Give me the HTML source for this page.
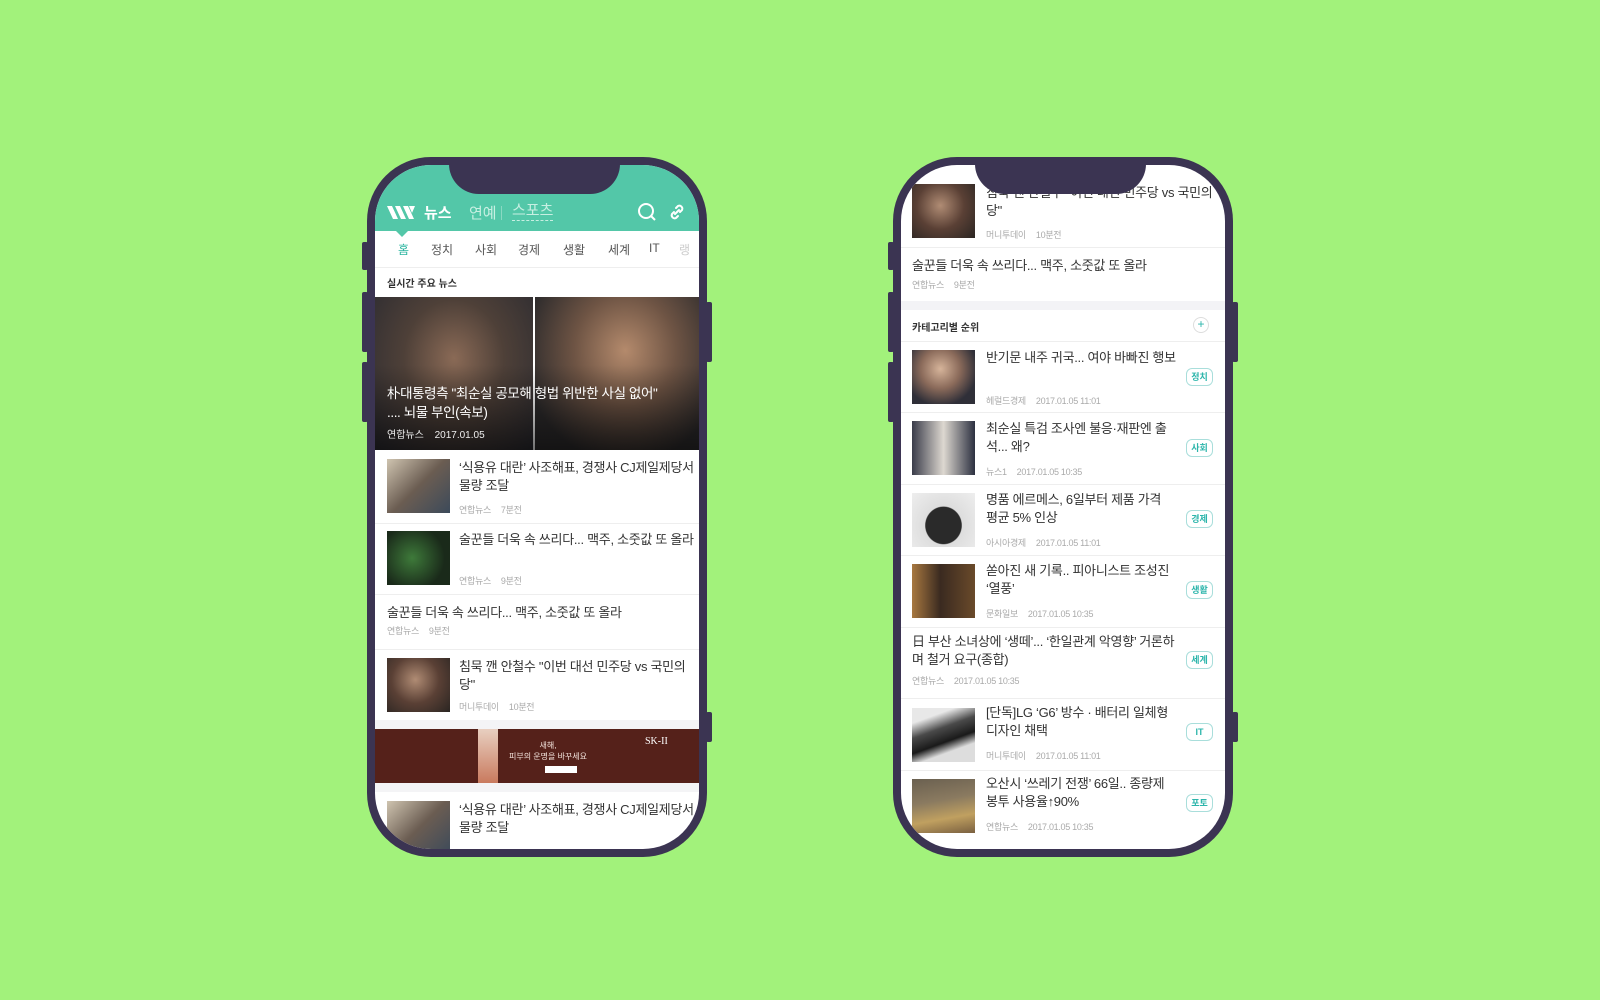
<!DOCTYPE html>
<html><head><meta charset="utf-8"><style>
*{margin:0;padding:0;box-sizing:border-box}
body{width:1600px;height:1000px;background:#a2f27b;position:relative;overflow:hidden;font-family:"Liberation Sans","Noto Sans CJK KR","NanumGothic",sans-serif;color:#333}
.phone{position:absolute;top:157px;width:340px;height:700px;background:#3b3452;border-radius:64px}
.btn{position:absolute;background:#3b3452;width:6px;border-radius:2px}
.screen{position:absolute;left:8px;top:8px;width:324px;height:684px;border-radius:56px;overflow:hidden;background:#fff}
.notch{position:absolute;left:82px;top:0;width:171px;height:37px;background:#3b3452;border-radius:0 0 30px 30px;z-index:5}
.a{position:absolute}
.t{position:absolute;font-size:13px;line-height:18px;color:#333;letter-spacing:-.3px}
.m{position:absolute;font-size:9px;color:#aaa;letter-spacing:-.3px}
.m span{margin-left:10px}
.hr{position:absolute;left:0;width:324px;height:1px;background:#eee}
.th{position:absolute;width:63px;height:54px}
.bd{position:absolute;right:12px;width:27px;height:18px;border:1px solid #a9dedb;border-radius:6px;color:#2cb5ab;font-size:9px;text-align:center;line-height:16px;font-weight:bold}
</style></head><body>

<!-- LEFT PHONE -->
<div class="phone" style="left:367px">
<div class="btn" style="left:-5px;top:85px;height:28px"></div>
<div class="btn" style="left:-5px;top:135px;height:60px"></div>
<div class="btn" style="left:-5px;top:205px;height:60px"></div>
<div class="btn" style="right:-5px;top:145px;height:60px"></div>
<div class="btn" style="right:-5px;top:555px;height:30px"></div>
<div class="screen">
 <div class="a" style="left:0;top:0;width:324px;height:66px;background:#53c7a8"></div>
 <svg class="a" style="left:12px;top:41px" width="30" height="13" viewBox="0 0 30 13"><path d="M0 0h5l6 13h-5zM8 0h5l6 13h-5zM16 0h5l6 13h-5zM22 0h6l-3 7z" fill="#fff"/></svg>
 <div class="a" style="left:49px;top:37px;font-size:15px;font-weight:bold;color:#fff">뉴스</div>
 <div class="a" style="left:94px;top:37px;font-size:15px;color:#c7efe2">연예</div>
 <div class="a" style="left:126px;top:41px;width:1px;height:14px;background:#8ad9c2"></div>
 <div class="a" style="left:137px;top:37px;font-size:15px;color:#c7efe2;border-bottom:1px dashed #c7efe2;line-height:18px">스포츠</div>
 <svg class="a" style="left:262px;top:37px" width="20" height="20" viewBox="0 0 20 20"><circle cx="9" cy="9" r="7" fill="none" stroke="#fff" stroke-width="2"/><path d="M14 14l4 4" stroke="#fff" stroke-width="2"/></svg>
 <svg class="a" style="left:292px;top:37px" width="20" height="20" viewBox="0 0 20 20"><path d="M8 12l4-4M9 6l2-2a3 3 0 014 4l-2 2M11 14l-2 2a3 3 0 01-4-4l2-2" fill="none" stroke="#fff" stroke-width="2" stroke-linecap="round"/></svg>
 <div class="a" style="left:21px;top:66px;width:0;height:0;border-left:6px solid transparent;border-right:6px solid transparent;border-top:6px solid #53c7a8"></div>
 <div class="a" style="top:76px;left:0;width:330px;font-size:12px;color:#555;height:20px">
  <span class="a" style="left:23px;color:#2cb5a0">홈</span><span class="a" style="left:56px">정치</span><span class="a" style="left:100px">사회</span><span class="a" style="left:143px">경제</span><span class="a" style="left:188px">생활</span><span class="a" style="left:233px">세계</span><span class="a" style="left:274px">IT</span><span class="a" style="left:304px;color:#ccc">랭</span>
 </div>
 <div class="hr" style="top:102px"></div>
 <div class="a" style="left:12px;top:110px;font-size:10px;font-weight:bold;color:#333">실시간 주요 뉴스</div>
 <div class="a" style="left:0;top:132px;width:158px;height:153px;background:radial-gradient(ellipse at 50% 40%,#8a6a56 0%,#4e4038 45%,#2a2a30 100%)"></div>
 <div class="a" style="left:160px;top:132px;width:164px;height:153px;background:radial-gradient(ellipse at 55% 35%,#b48a6c 0%,#6e5444 40%,#2d2b2c 80%)"></div>
 <div class="a" style="left:0;top:200px;width:324px;height:85px;background:linear-gradient(transparent,rgba(0,0,0,.55))"></div>
 <div class="a" style="left:12px;top:219px;font-size:13.5px;line-height:19px;color:#fff;letter-spacing:-.4px">朴대통령측 "최순실 공모해 형법 위반한 사실 없어"<br>.... 뇌물 부인(속보)</div>
 <div class="a" style="left:12px;top:261px;font-size:10px;color:#eee">연합뉴스 <span style="margin-left:8px">2017.01.05</span></div>
 <!-- items -->
 <div class="th" style="left:12px;top:294px;background:linear-gradient(135deg,#cfc4b0,#6b5d52 50%,#3c4a5a)"></div>
 <div class="t" style="left:84px;top:294px">‘식용유 대란’ 사조해표, 경쟁사 CJ제일제당서<br>물량 조달</div>
 <div class="m" style="left:84px;top:338px">연합뉴스<span>7분전</span></div>
 <div class="hr" style="top:358px"></div>
 <div class="th" style="left:12px;top:366px;background:radial-gradient(circle at 40% 50%,#3e7a3a,#1a2a1a 70%)"></div>
 <div class="t" style="left:84px;top:366px">술꾼들 더욱 속 쓰리다... 맥주, 소줏값 또 올라</div>
 <div class="m" style="left:84px;top:409px">연합뉴스<span>9분전</span></div>
 <div class="hr" style="top:429px"></div>
 <div class="t" style="left:12px;top:439px">술꾼들 더욱 속 쓰리다... 맥주, 소줏값 또 올라</div>
 <div class="m" style="left:12px;top:459px">연합뉴스<span>9분전</span></div>
 <div class="hr" style="top:484px"></div>
 <div class="th" style="left:12px;top:493px;background:radial-gradient(circle at 45% 40%,#b08c74,#5a4035 50%,#2a2522)"></div>
 <div class="t" style="left:84px;top:493px">침묵 깬 안철수 "이번 대선 민주당 vs 국민의<br>당"</div>
 <div class="m" style="left:84px;top:535px">머니투데이<span>10분전</span></div>
 <div class="a" style="left:0;top:555px;width:324px;height:9px;background:#f4f4f6"></div>
 <div class="a" style="left:0;top:564px;width:324px;height:54px;background:#55211a"></div>
 <div class="a" style="left:103px;top:564px;width:20px;height:54px;background:linear-gradient(#e8cfc0,#c97a5e)"></div>
 <div class="a" style="left:133px;top:575px;font-size:8px;line-height:11px;color:#f3e3dc;text-align:center;width:80px">새해,<br>피부의 운명을 바꾸세요</div>
 <div class="a" style="left:170px;top:601px;width:32px;height:7px;background:#fff"></div>
 <div class="a" style="left:270px;top:571px;font-size:10px;color:#fff;font-family:'Liberation Serif',serif">SK-II</div>
 <div class="a" style="left:0;top:618px;width:324px;height:9px;background:#f4f4f6"></div>
 <div class="th" style="left:12px;top:636px;background:linear-gradient(135deg,#cfc4b0,#6b5d52 50%,#3c4a5a)"></div>
 <div class="t" style="left:84px;top:636px">‘식용유 대란’ 사조해표, 경쟁사 CJ제일제당서<br>물량 조달</div>
</div>
<div class="notch"></div>
</div>

<!-- RIGHT PHONE -->
<div class="phone" style="left:893px">
<div class="btn" style="left:-5px;top:85px;height:28px"></div>
<div class="btn" style="left:-5px;top:135px;height:60px"></div>
<div class="btn" style="left:-5px;top:205px;height:60px"></div>
<div class="btn" style="right:-5px;top:145px;height:60px"></div>
<div class="btn" style="right:-5px;top:555px;height:30px"></div>
<div class="screen">
 <div class="th" style="left:11px;top:19px;background:radial-gradient(circle at 45% 40%,#b08c74,#5a4035 50%,#2a2522)"></div>
 <div class="t" style="left:85px;top:19px">침묵 깬 안철수 "이번 대선 민주당 vs 국민의<br>당"</div>
 <div class="m" style="left:85px;top:63px">머니투데이<span>10분전</span></div>
 <div class="hr" style="top:82px"></div>
 <div class="t" style="left:11px;top:92px">술꾼들 더욱 속 쓰리다... 맥주, 소줏값 또 올라</div>
 <div class="m" style="left:11px;top:113px">연합뉴스<span>9분전</span></div>
 <div class="a" style="left:0;top:136px;width:324px;height:9px;background:#f3f3f6"></div>
 <div class="a" style="left:11px;top:154px;font-size:10px;font-weight:bold;color:#333">카테고리별 순위</div>
 <div class="a" style="left:292px;top:152px;width:16px;height:16px;border:1px solid #ddd;border-radius:50%;color:#2cb5ab;font-size:12px;line-height:13px;text-align:center">+</div>
 <div class="hr" style="top:176px"></div>

 <div class="th" style="left:11px;top:185px;background:radial-gradient(circle at 45% 35%,#d6b49a,#8a6a5a 40%,#2f2f38 75%)"></div>
 <div class="t" style="left:85px;top:184px">반기문 내주 귀국... 여야 바빠진 행보</div>
 <div class="m" style="left:85px;top:229px">헤럴드경제<span>2017.01.05 11:01</span></div>
 <div class="bd" style="top:203px">정치</div>
 <div class="hr" style="top:247px"></div>

 <div class="th" style="left:11px;top:256px;background:linear-gradient(90deg,#3a3c4a,#ddd8d0 50%,#2c3040)"></div>
 <div class="t" style="left:85px;top:255px">최순실 특검 조사엔 불응·재판엔 출<br>석... 왜?</div>
 <div class="m" style="left:85px;top:300px">뉴스1<span>2017.01.05 10:35</span></div>
 <div class="bd" style="top:274px">사회</div>
 <div class="hr" style="top:319px"></div>

 <div class="th" style="left:11px;top:328px;background:radial-gradient(ellipse at 50% 60%,#2a2a2a 40%,#ddd 42%,#eee)"></div>
 <div class="t" style="left:85px;top:326px">명품 에르메스, 6일부터 제품 가격<br>평균 5% 인상</div>
 <div class="m" style="left:85px;top:371px">아시아경제<span>2017.01.05 11:01</span></div>
 <div class="bd" style="top:345px">경제</div>
 <div class="hr" style="top:390px"></div>

 <div class="th" style="left:11px;top:399px;background:linear-gradient(90deg,#a87840,#3a2a20 45%,#6a4a2a)"></div>
 <div class="t" style="left:85px;top:397px">쏟아진 새 기록.. 피아니스트 조성진<br>‘열풍’</div>
 <div class="m" style="left:85px;top:442px">문화일보<span>2017.01.05 10:35</span></div>
 <div class="bd" style="top:416px">생활</div>
 <div class="hr" style="top:462px"></div>

 <div class="t" style="left:11px;top:468px">日 부산 소녀상에 ‘생떼’... ‘한일관계 악영향’ 거론하<br>며 철거 요구(종합)</div>
 <div class="m" style="left:11px;top:509px">연합뉴스<span>2017.01.05 10:35</span></div>
 <div class="bd" style="top:486px">세계</div>
 <div class="hr" style="top:533px"></div>

 <div class="th" style="left:11px;top:543px;background:linear-gradient(160deg,#e8e8e8 20%,#4a4a4a 40%,#1a1a1a 60%,#ddd 75%)"></div>
 <div class="t" style="left:85px;top:539px">[단독]LG ‘G6’ 방수 · 배터리 일체형<br>디자인 채택</div>
 <div class="m" style="left:85px;top:584px">머니투데이<span>2017.01.05 11:01</span></div>
 <div class="bd" style="top:558px">IT</div>
 <div class="hr" style="top:605px"></div>

 <div class="th" style="left:11px;top:614px;background:linear-gradient(170deg,#6a6050,#8a7a60 40%,#c0a060 70%,#7a6040)"></div>
 <div class="t" style="left:85px;top:610px">오산시 ‘쓰레기 전쟁’ 66일.. 종량제<br>봉투 사용율↑90%</div>
 <div class="m" style="left:85px;top:655px">연합뉴스<span>2017.01.05 10:35</span></div>
 <div class="bd" style="top:629px">포토</div>
</div>
<div class="notch"></div>
</div>
</body></html>
